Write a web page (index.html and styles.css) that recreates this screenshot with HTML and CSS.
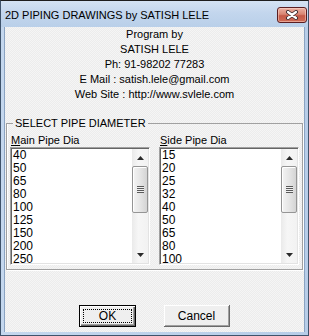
FILE: index.html
```html
<!DOCTYPE html>
<html>
<head>
<meta charset="utf-8">
<link rel="stylesheet" href="styles.css">
</head>
<body>
<div class="window">
  <div class="titlebar">
    <span class="title">2D PIPING DRAWINGS by SATISH LELE</span>
    <span class="close">
      <svg width="14" height="10" viewBox="0 0 14 10">
        <path d="M3 2 L11 8 M11 2 L3 8" stroke="#3b2a2e" stroke-width="4" stroke-linecap="round" fill="none"/>
        <path d="M3 2 L11 8 M11 2 L3 8" stroke="#ffffff" stroke-width="2.2" stroke-linecap="round" fill="none"/>
      </svg>
    </span>
  </div>
  <div class="client">
    <div class="info">
      <div>Program by</div>
      <div>SATISH LELE</div>
      <div>Ph: 91-98202 77283</div>
      <div>E Mail : satish.lele@gmail.com</div>
      <div>Web Site : http://www.svlele.com</div>
    </div>
    <fieldset class="group">
      <legend class="group-title">SELECT PIPE DIAMETER</legend>
      <div class="cols">
        <div class="col">
          <div class="label"><u>M</u>ain Pipe Dia</div>
          <div class="listbox">
            <ul class="items">
              <li>40</li><li>50</li><li>65</li><li>80</li><li>100</li><li>125</li><li>150</li><li>200</li><li>250</li>
            </ul>
            <div class="scrollbar">
              <div class="arrow"><svg width="7" height="4" viewBox="0 0 7 4"><polygon points="0,4 7,4 3.5,0" fill="#2a2a2a"/></svg></div>
              <div class="track"><div class="thumb"><span class="grip"></span></div></div>
              <div class="arrow"><svg width="7" height="4" viewBox="0 0 7 4"><polygon points="0,0 7,0 3.5,4" fill="#2a2a2a"/></svg></div>
            </div>
          </div>
        </div>
        <div class="col">
          <div class="label"><u>S</u>ide Pipe Dia</div>
          <div class="listbox">
            <ul class="items">
              <li>15</li><li>20</li><li>25</li><li>32</li><li>40</li><li>50</li><li>65</li><li>80</li><li>100</li>
            </ul>
            <div class="scrollbar">
              <div class="arrow"><svg width="7" height="4" viewBox="0 0 7 4"><polygon points="0,4 7,4 3.5,0" fill="#2a2a2a"/></svg></div>
              <div class="track"><div class="thumb"><span class="grip"></span></div></div>
              <div class="arrow"><svg width="7" height="4" viewBox="0 0 7 4"><polygon points="0,0 7,0 3.5,4" fill="#2a2a2a"/></svg></div>
            </div>
          </div>
        </div>
      </div>
    </fieldset>
    <div class="buttons">
      <button class="btn btn-ok"><span class="focus">OK</span></button>
      <button class="btn btn-cancel"><span class="plain">Cancel</span></button>
    </div>
  </div>
</div>
</body>
</html>
```
FILE: styles.css
```css
* { box-sizing: border-box; }
html, body { margin: 0; padding: 0; }
body {
  width: 309px;
  height: 336px;
  overflow: hidden;
  font-family: "Liberation Sans", Arial, sans-serif;
  background: #bcd1ea;
}
.window {
  width: 309px;
  height: 336px;
  border: 1px solid #3f536b;
  border-top-color: #1e1e1e;
  background: linear-gradient(to right, #c4d7ee, #b7cde8);
  padding: 0 3px 3px 3px;
  display: flex;
  flex-direction: column;
}
.titlebar {
  height: 26px;
  margin: 0 -3px;
  padding: 0 1px 0 4px;
  display: flex;
  justify-content: space-between;
  align-items: flex-start;
  background: linear-gradient(to bottom, #d4e2f3 0%, #c3d6ed 45%, #b9cfe9 100%);
}
.title {
  padding-top: 7px;
  font-size: 11px;
  line-height: 14px;
  color: #000;
  white-space: nowrap;
}
.close {
  margin-top: 6px;
  width: 30px;
  height: 16px;
  border: 1px solid #5a1e22;
  border-radius: 3px;
  background: linear-gradient(to bottom, #eab0a2 0%, #d98572 45%, #c55a48 55%, #cf6c56 100%);
  display: flex;
  align-items: center;
  justify-content: center;
  box-shadow: inset 0 0 0 1px rgba(255,220,210,0.5);
}
.close svg { display: block; }
.client {
  flex: 1;
  border: 1px solid #8aa3c2;
  border-bottom: none;
  border-top: none;
  background: repeating-conic-gradient(#ececec 0 25%, #f5f5f5 0 50%) 0 0 / 2px 2px;
  display: flex;
  flex-direction: column;
}
.info {
  text-align: center;
  font-size: 11px;
  line-height: 15px;
  color: #000;
}
.group {
  margin: 16px 1px 0 1px;
  padding: 5px 3px 4px 3px;
  border: 1px solid #a0a0a0;
  box-shadow: 1px 1px 0 #ffffff, inset 1px 0 0 #ffffff;
  min-width: 0;
}
.group-title {
  margin-left: 3px;
  padding: 0 2px;
  font-size: 11px;
  line-height: 11px;
  color: #000;
}
.cols {
  display: flex;
  justify-content: space-between;
}
.col {
  width: 140px;
  display: flex;
  flex-direction: column;
}
.label {
  font-size: 11px;
  line-height: 13px;
  padding-left: 1px;
  color: #000;
}
.listbox {
  height: 118px;
  background: #fff;
  border-style: solid;
  border-width: 1px;
  border-color: #a0a0a0 #ffffff #ffffff #a0a0a0;
  box-shadow: inset 1px 1px 0 #646464, inset -1px -1px 0 #e3e3e3;
  padding: 1px;
  display: flex;
}
.items {
  list-style: none;
  margin: 0;
  padding: 0 0 0 1px;
  flex: 1;
}
.items li {
  font-size: 12px;
  line-height: 13px;
  color: #000;
}
.scrollbar {
  width: 16px;
  display: flex;
  flex-direction: column;
  background: linear-gradient(to right, #eaeaea, #f6f6f6 40%, #f2f2f2);
}
.arrow {
  height: 17px;
  display: flex;
  align-items: center;
  justify-content: center;
}
.arrow svg { display: block; }
.track {
  flex: 1;
}
.thumb {
  height: 47px;
  margin: 0 0 0 0;
  border: 1px solid #959595;
  border-radius: 2px;
  background: linear-gradient(to right, #f4f4f4 0%, #e6e6e6 50%, #d4d4d4 100%);
  box-shadow: inset 1px 1px 0 #ffffff;
  display: flex;
  align-items: center;
  justify-content: center;
}
.grip {
  width: 7px;
  height: 7px;
  background: repeating-linear-gradient(to bottom, #5a5a5a 0 1px, #f0f0f0 1px 2px);
}
.buttons {
  margin-top: 35px;
  display: flex;
  justify-content: center;
  gap: 28px;
}
.btn {
  height: 22px;
  padding: 0;
  margin: 0;
  font-family: "Liberation Sans", Arial, sans-serif;
  font-size: 12px;
  color: #000;
  background: #efefef;
  display: flex;
  align-items: center;
  justify-content: center;
}
.btn-ok {
  width: 57px;
  border: 1px solid #000;
  box-shadow: inset 1px 1px 0 #ffffff, inset -1px -1px 0 #696969, inset -2px -2px 0 #a0a0a0;
  padding: 3px;
}
.btn-cancel {
  width: 66px;
  border: none;
  border-right: 1px solid #696969;
  border-bottom: 1px solid #696969;
  box-shadow: inset 1px 1px 0 #ffffff, inset -1px -1px 0 #a0a0a0;
}
.focus {
  width: 100%;
  height: 100%;
  border: 1px dotted #000;
  display: flex;
  align-items: center;
  justify-content: center;
}
.plain {
  display: block;
}
```
